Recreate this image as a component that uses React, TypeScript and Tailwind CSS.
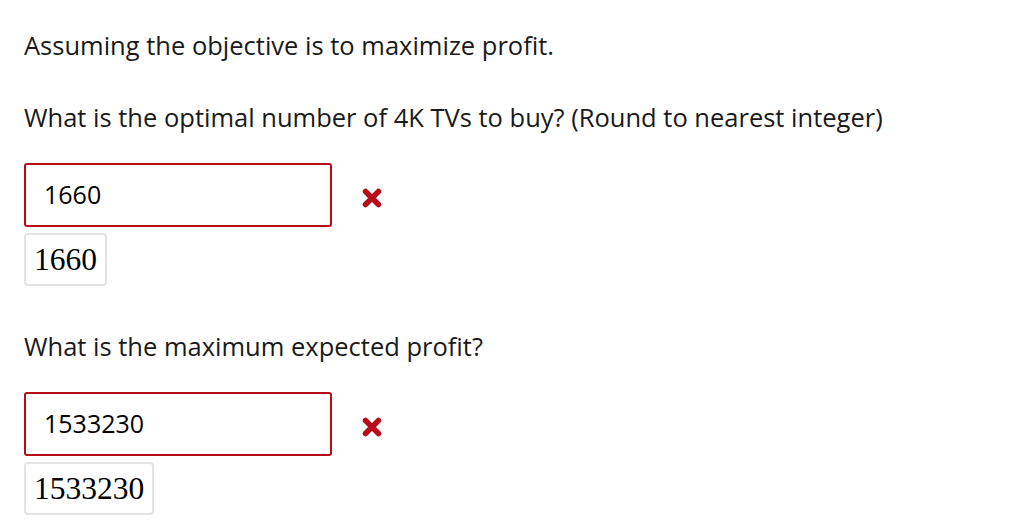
import React from 'react'

function WrongMark() {
  return (
    <svg width="20" height="20" viewBox="0 0 20 20" className="ml-[30px] mt-[6px] shrink-0">
      <path d="M3.5 3.5 L16.5 16.5 M16.5 3.5 L3.5 16.5" stroke="#b70d1b" strokeWidth="5.5" strokeLinecap="round" />
    </svg>
  )
}

function Answer({ given, correct }: { given: string; correct: string }) {
  return (
    <div>
      <div className="flex items-center">
        <div className="w-[308px] h-[64px] border-2 border-[#b70d1b] rounded-[3px] flex items-center pl-[18px] text-[25px] text-black">
          {given}
        </div>
        <WrongMark />
      </div>
      <div className="mt-[6px] inline-block border-2 border-[#e4e4e4] rounded-[4px] px-[8px] h-[53px] leading-[49px] text-[31.5px] text-black font-['Liberation_Serif',serif]">
        {correct}
      </div>
    </div>
  )
}

export default function App() {
  return (
    <div className="bg-white min-h-screen px-[24px] pt-[27px] font-['Open_Sans',sans-serif] text-[#1a1a1a]">
      <p className="text-[25.5px] leading-[36px]">Assuming the objective is to maximize profit.</p>

      <p className="text-[25.5px] leading-[36px] mt-[36px]">
        What is the optimal number of 4K TVs to buy? (Round to nearest integer)
      </p>
      <div className="mt-[28px]">
        <Answer given="1660" correct="1660" />
      </div>

      <p className="text-[25.5px] leading-[36px] mt-[42px]">What is the maximum expected profit?</p>
      <div className="mt-[28px]">
        <Answer given="1533230" correct="1533230" />
      </div>
    </div>
  )
}
